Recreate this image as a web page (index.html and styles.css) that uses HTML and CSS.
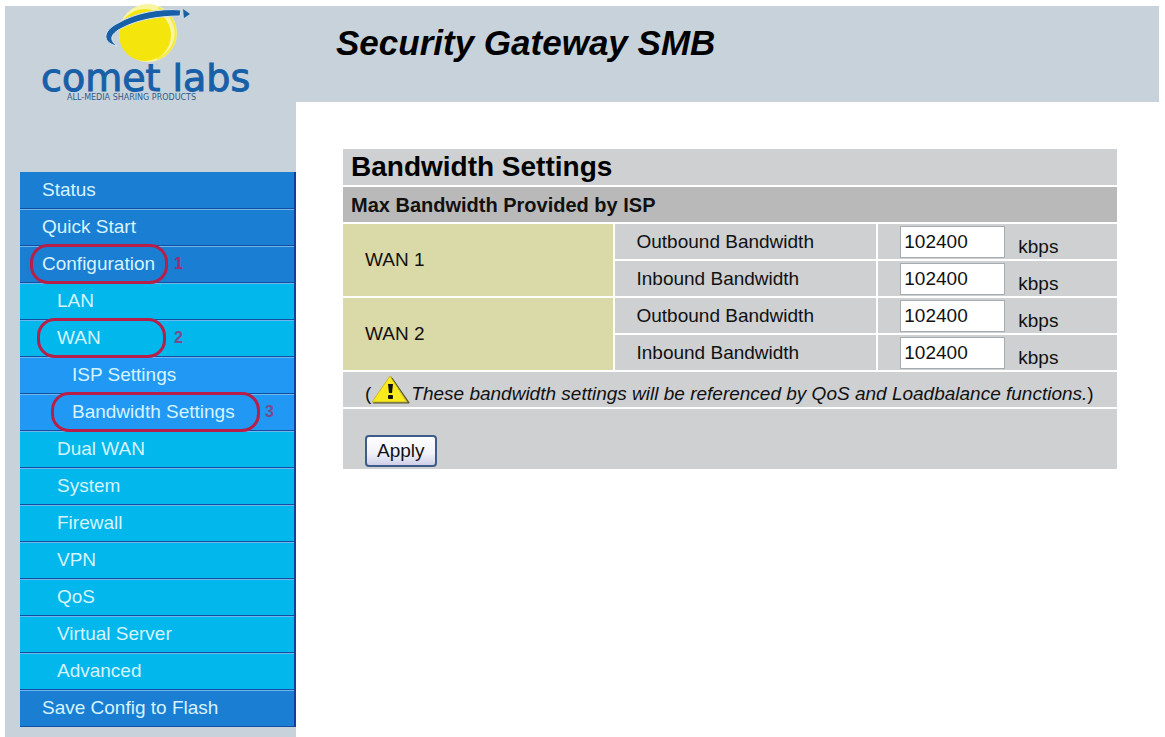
FILE: index.html
```html
<!DOCTYPE html>
<html lang="en">
<head>
    <meta charset="UTF-8">
    <title>Security Gateway SMB - Bandwidth Settings</title>
    <link rel="stylesheet" href="styles.css">
</head>
<body>
    <header class="header">
        <div class="logo">
            <svg width="291" height="96" viewBox="5 6 291 96" role="img" aria-label="comet labs">
                <circle cx="148" cy="33" r="29" fill="#f8f4a0"/>
                <path d="M158 8 A27 27 0 0 1 157 59" fill="none" stroke="#f6ea3a" stroke-width="2"/>
                <circle cx="145" cy="35" r="26" fill="#f4e60c"/>
                <path d="M117 46 C102 43 102 31 118 23 C135 13 160 8 181 10 L180 16 C158 16 137 20 122 28 C110 34 109 40 117 46 Z" fill="#1760a8" stroke="#dce8f0" stroke-width="1"/>
                <path d="M183 9 L190 14 L184 18 Z" fill="#1760a8"/>
                <text class="logo-name" x="41" y="91">comet labs</text>
                <text class="logo-tagline" x="67" y="100">ALL-MEDIA SHARING PRODUCTS</text>
            </svg>
        </div>
        <h1>Security Gateway SMB</h1>
    </header>

    <div class="page">
        <nav class="sidebar">
            <ul class="menu">
                <li><a href="#">Status</a></li>
                <li><a href="#">Quick Start</a></li>
                <li><a href="#">Configuration</a><span class="ring ring-1"></span><span class="step step-1">1</span></li>
                <li class="sub"><a href="#">LAN</a></li>
                <li class="sub"><a href="#">WAN</a><span class="ring ring-2"></span><span class="step step-2">2</span></li>
                <li class="subsub"><a href="#">ISP Settings</a></li>
                <li class="subsub"><a href="#">Bandwidth Settings</a><span class="ring ring-3"></span><span class="step step-3">3</span></li>
                <li class="sub"><a href="#">Dual WAN</a></li>
                <li class="sub"><a href="#">System</a></li>
                <li class="sub"><a href="#">Firewall</a></li>
                <li class="sub"><a href="#">VPN</a></li>
                <li class="sub"><a href="#">QoS</a></li>
                <li class="sub"><a href="#">Virtual Server</a></li>
                <li class="sub"><a href="#">Advanced</a></li>
                <li><a href="#">Save Config to Flash</a></li>
            </ul>
        </nav>

        <main class="content">
            <form>
                <table class="settings">
                    <colgroup>
                        <col class="col-wan">
                        <col class="col-label">
                        <col>
                    </colgroup>
                    <tr>
                        <th class="title" colspan="3">Bandwidth Settings</th>
                    </tr>
                    <tr>
                        <th class="subtitle" colspan="3">Max Bandwidth Provided by ISP</th>
                    </tr>
                    <tr>
                        <td class="wan" rowspan="2">WAN 1</td>
                        <td class="label"><label for="wan1-out">Outbound Bandwidth</label></td>
                        <td><div class="field"><input type="text" id="wan1-out" value="102400"><span>kbps</span></div></td>
                    </tr>
                    <tr>
                        <td class="label"><label for="wan1-in">Inbound Bandwidth</label></td>
                        <td><div class="field"><input type="text" id="wan1-in" value="102400"><span>kbps</span></div></td>
                    </tr>
                    <tr>
                        <td class="wan" rowspan="2">WAN 2</td>
                        <td class="label"><label for="wan2-out">Outbound Bandwidth</label></td>
                        <td><div class="field"><input type="text" id="wan2-out" value="102400"><span>kbps</span></div></td>
                    </tr>
                    <tr>
                        <td class="label"><label for="wan2-in">Inbound Bandwidth</label></td>
                        <td><div class="field"><input type="text" id="wan2-in" value="102400"><span>kbps</span></div></td>
                    </tr>
                    <tr>
                        <td colspan="3">
                            <div class="note">
                                <span>(</span>
                                <svg width="40" height="30" viewBox="0 0 40 30" aria-hidden="true">
                                    <path d="M20 1 L39 28 L3 28 Z" fill="#8a8a50"/>
                                    <path d="M19 1 L36 27 L1 27 Z" fill="#f8ea1c" stroke="#c8b830" stroke-width="1"/>
                                    <path d="M21 3 L38 28 L2 28" fill="none" stroke="#55552c" stroke-width="1"/>
                                    <path d="M17 9 L22 9 L21 18 L18 18 Z" fill="#111"/>
                                    <rect x="17" y="20" width="5" height="4" rx="1" fill="#111"/>
                                </svg>
                                <em>These bandwidth settings will be referenced by QoS and Loadbalance functions.</em><span>)</span>
                            </div>
                        </td>
                    </tr>
                    <tr>
                        <td class="actions" colspan="3"><button type="submit">Apply</button></td>
                    </tr>
                </table>
            </form>
        </main>
    </div>
</body>
</html>
```
FILE: styles.css
```css
* {
    box-sizing: border-box;
}

body {
    margin: 0;
    padding: 6px 6px 0 5px;
    min-height: 100vh;
    display: flex;
    flex-direction: column;
    font-family: "Liberation Sans", Arial, sans-serif;
    font-size: 19px;
    line-height: 22px;
    color: #111;
    background: #fff;
}

/* Header */
.header {
    display: flex;
    background: #c8d2db;
}

.logo {
    width: 291px;
    flex: none;
}

.logo svg {
    display: block;
    overflow: visible;
}

.logo-name {
    font-family: "DejaVu Sans", sans-serif;
    font-size: 38px;
    fill: #1760a8;
    stroke: #1760a8;
    stroke-width: 1px;
}

.logo-tagline {
    font-family: "DejaVu Sans", sans-serif;
    font-size: 8px;
    fill: #2c5c8c;
}

h1 {
    margin: 0;
    padding: 17px 0 0 40px;
    font-size: 35px;
    line-height: 40px;
    font-style: italic;
    color: #000;
}

/* Sidebar */
.page {
    display: flex;
    flex: 1;
}

.sidebar {
    width: 291px;
    flex: none;
    padding: 70px 0 9px 15px;
    background: #c8d2db;
}

.menu {
    list-style: none;
    margin: 0;
    padding: 0;
    border-right: 2px solid #12409c;
}

.menu li {
    position: relative;
    background: #1a7ed2;
    border-top: 1px solid #6fb6ee;
    border-bottom: 1px solid #12509f;
}

.menu li:first-child {
    border-top-color: #1a7ed2;
}

.menu a {
    display: block;
    padding: 6px 0 7px 22px;
    color: #d6f4ff;
    text-decoration: none;
}

.menu .sub {
    background: #02b7ec;
}

.menu .sub a {
    padding-left: 37px;
}

.menu .subsub {
    background: #2199f4;
}

.menu .subsub a {
    padding-left: 52px;
}

/* Numbered callouts over the menu */
.ring {
    position: absolute;
    z-index: 1;
    top: -3px;
    height: 40px;
    border: 3px solid #b81f48;
    border-radius: 18px;
    pointer-events: none;
}

.ring-1 {
    left: 10px;
    width: 138px;
}

.ring-2 {
    left: 17px;
    width: 129px;
}

.ring-3 {
    left: 31px;
    width: 209px;
}

.step {
    position: absolute;
    top: 6px;
    font-size: 16px;
    font-weight: bold;
    color: #7a4a8c;
}

.step-1 {
    left: 154px;
    color: #a02c70;
}

.step-2 {
    left: 154px;
}

.step-3 {
    left: 245px;
}

/* Settings table */
.content {
    flex: 1;
    padding: 45px 40px 0 45px;
}

.settings {
    width: 100%;
    table-layout: fixed;
    border-spacing: 2px;
}

.col-wan {
    width: 35%;
}

.col-label {
    width: 34%;
}

.settings th,
.settings td {
    height: 35px;
    padding: 0;
    text-align: left;
    background: #ced0d2;
}

.settings .title {
    height: 36px;
    padding-left: 8px;
    font-size: 28px;
    line-height: 32px;
    color: #000;
}

.settings .subtitle {
    padding-left: 8px;
    font-size: 20px;
    background: #b9b9b9;
}

.settings .wan {
    padding-left: 22px;
    background: #dad9a8;
}

.settings .label {
    padding-left: 22px;
}

.field {
    display: flex;
    align-items: flex-end;
    gap: 13px;
    padding-left: 22px;
}

.field input {
    width: 105px;
    height: 32px;
    padding: 0 3px;
    border: 1px solid #a5acb2;
    font: inherit;
    color: #111;
    background: #fff;
}

.note {
    display: flex;
    align-items: flex-end;
    padding-left: 22px;
    white-space: nowrap;
}

.note svg {
    flex: none;
}

.settings .actions {
    height: 60px;
    padding: 0 0 2px 22px;
    vertical-align: bottom;
}

.actions button {
    display: block;
    height: 32px;
    padding: 0 10px;
    border: 2px solid #3f5c88;
    border-radius: 4px;
    font: inherit;
    color: #111;
    background: linear-gradient(#fff, #f0f0fa 60%, #cfd0e8);
}
```
